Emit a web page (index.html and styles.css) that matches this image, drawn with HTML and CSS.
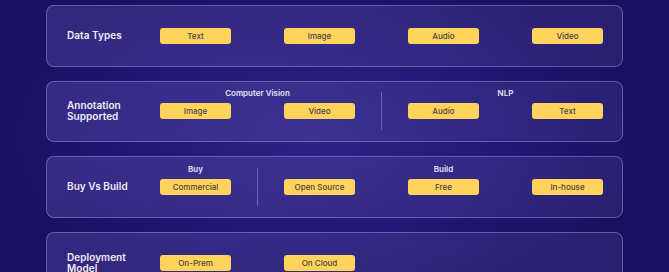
FILE: index.html
```html
<!DOCTYPE html>
<html>
<head>
<meta charset="utf-8">
<link rel="stylesheet" href="styles.css">
</head>
<body>
<div class="page">
  <div class="card">
    <div class="label">Data Types</div>
    <div class="group cols4">
      <span class="pill">Text</span>
      <span class="pill">Image</span>
      <span class="pill">Audio</span>
      <span class="pill">Video</span>
    </div>
  </div>

  <div class="card">
    <div class="label">Annotation<br>Supported</div>
    <div class="group cols2">
      <div class="heading">Computer Vision</div>
      <span class="pill">Image</span>
      <span class="pill">Video</span>
    </div>
    <div class="divider"></div>
    <div class="group cols2">
      <div class="heading">NLP</div>
      <span class="pill">Audio</span>
      <span class="pill">Text</span>
    </div>
  </div>

  <div class="card">
    <div class="label">Buy Vs Build</div>
    <div class="group cols1">
      <div class="heading">Buy</div>
      <span class="pill">Commercial</span>
    </div>
    <div class="divider"></div>
    <div class="group cols3">
      <div class="heading">Build</div>
      <span class="pill">Open Source</span>
      <span class="pill">Free</span>
      <span class="pill">In-house</span>
    </div>
  </div>

  <div class="card">
    <div class="label">Deployment<br>Model</div>
    <div class="group cols2">
      <span class="pill">On-Prem</span>
      <span class="pill">On Cloud</span>
    </div>
  </div>
</div>
</body>
</html>
```
FILE: styles.css
```css
html, body {
  margin: 0;
  padding: 0;
  height: 100%;
  overflow: hidden;
}
body {
  background: radial-gradient(ellipse 60% 80% at 48% 50%, #2c2385 0%, #221876 45%, #1a1062 80%);
  font-family: Inter, "Liberation Sans", sans-serif;
}
.page {
  padding: 5px 0 0 46px;
  display: flex;
  flex-direction: column;
  gap: 14px;
}
.card {
  box-sizing: border-box;
  width: 577px;
  height: 61.6px;
  flex: none;
  border: 1px solid rgba(190, 180, 255, 0.38);
  border-radius: 8px;
  background: linear-gradient(100deg, rgba(110, 95, 190, 0.32) 0%, rgba(95, 85, 170, 0.3) 50%, rgba(80, 72, 150, 0.28) 100%);
  display: flex;
  align-items: center;
  padding: 0 0 0 20px;
}
.label {
  width: 93px;
  flex: none;
  color: #eeedf7;
  font-size: 10px;
  font-weight: 600;
  line-height: 11px;
  letter-spacing: 0.05px;
}
.group {
  display: grid;
  grid-template-rows: 12px 16px 12px;
  row-gap: 4px;
  column-gap: 53px;
}
.cols1 { grid-template-columns: 71px; }
.cols2 { grid-template-columns: repeat(2, 71px); }
.cols3 { grid-template-columns: repeat(3, 71px); }
.cols4 { grid-template-columns: repeat(4, 71px); }
.heading {
  grid-column: 1 / -1;
  grid-row: 1;
  text-align: center;
  color: #e6e4f3;
  font-size: 8px;
  font-weight: 600;
  line-height: 12px;
}
.pill {
  grid-row: 2;
  background: #ffd35c;
  border-radius: 3px;
  color: #4a4343;
  font-size: 8px;
  font-weight: 500;
  line-height: 16px;
  text-align: center;
}
.divider {
  width: 1px;
  height: 38px;
  margin: 0 26px;
  background: rgba(170, 160, 230, 0.45);
  flex: none;
}
```
